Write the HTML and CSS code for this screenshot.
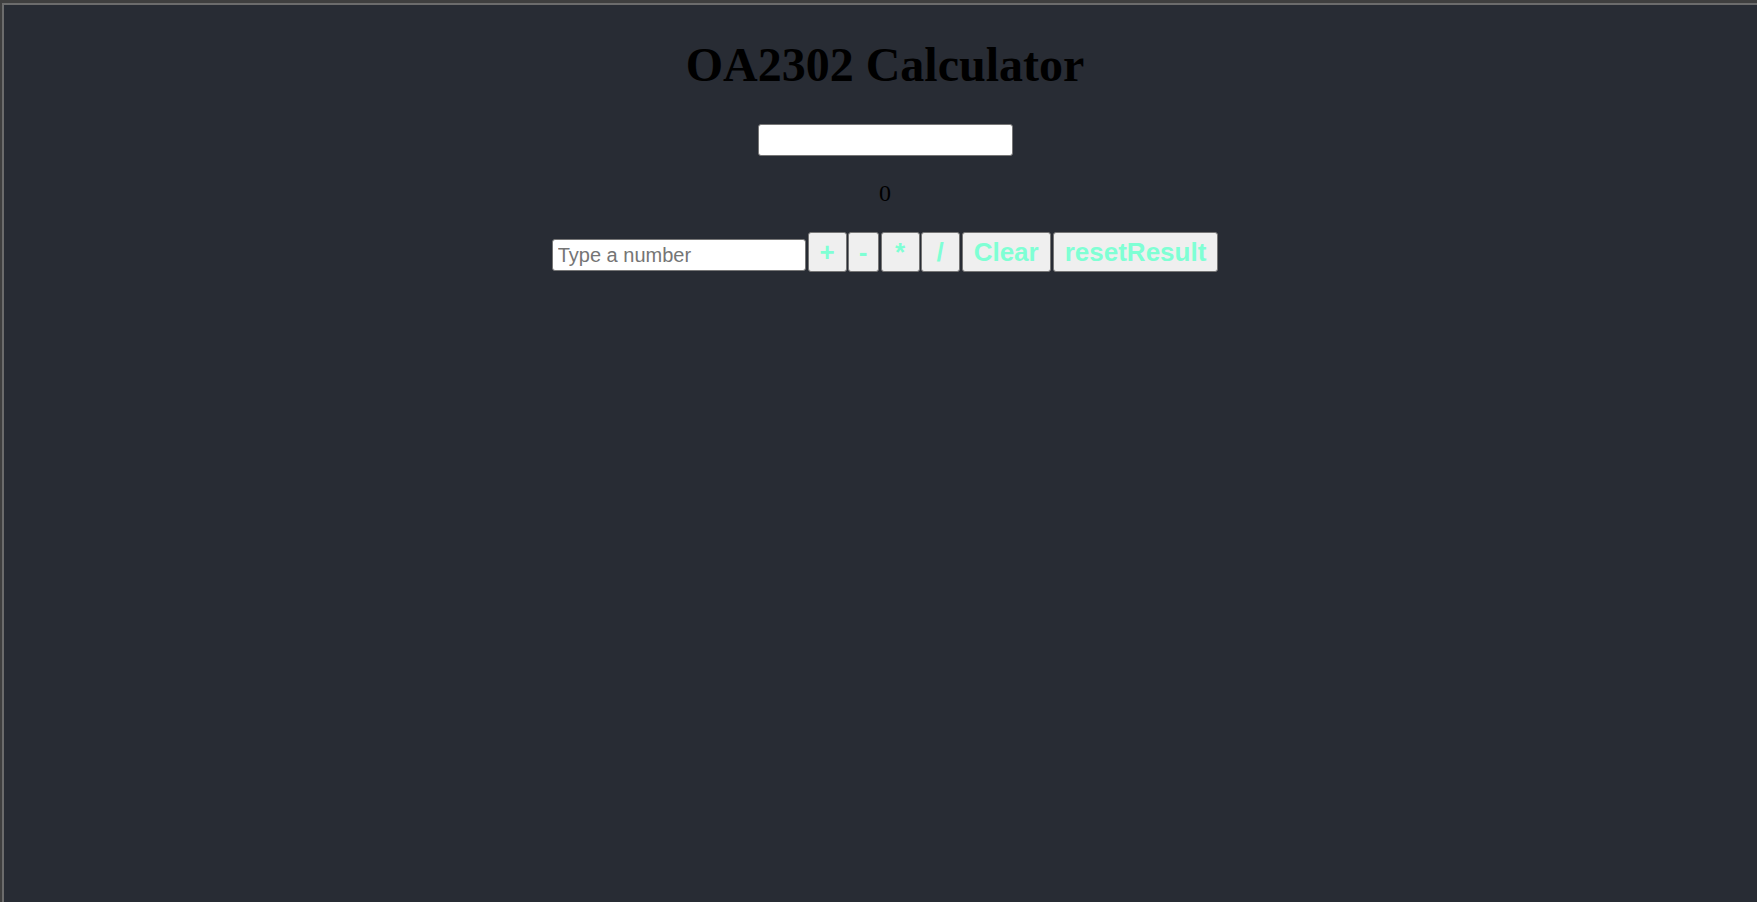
FILE: index.html
```html
<!DOCTYPE html>
<html>
<head>
<meta charset="utf-8">
<title>OA2302 Calculator</title>
<link rel="stylesheet" href="styles.css">
</head>
<body>
<div class="frame">
  <div class="frame-inner">
    <main class="app">
      <h1 class="title">OA2302 Calculator</h1>
      <input class="field field-display" type="text" value="">
      <p class="result">0</p>
      <form class="controls">
        <input class="field field-number" type="number" placeholder="Type a number">
        <button type="button" class="btn btn-add">+</button>
        <button type="button" class="btn btn-sub">-</button>
        <button type="button" class="btn btn-mul">*</button>
        <button type="button" class="btn btn-div">/</button>
        <button type="button" class="btn btn-word">Clear</button>
        <button type="button" class="btn btn-word">resetResult</button>
      </form>
    </main>
  </div>
</div>
</body>
</html>
```

FILE: styles.css
```css
html, body {
  margin: 0;
  padding: 0;
  height: 100%;
  overflow: hidden;
  background: #282c34;
}

.frame {
  box-sizing: border-box;
  height: 902px;
  border-top: 3px solid #3f3f3f;
  border-left: 2px solid #3f3f3f;
}

.frame-inner {
  box-sizing: border-box;
  height: 100%;
  border-top: 2px solid #6c6c6c;
  border-left: 2px solid #6c6c6c;
  background: #282c34;
  padding-left: 9px;
}

.app {
  display: flex;
  flex-direction: column;
  align-items: center;
  padding-top: 33px;
  font-family: "Liberation Serif", "Times New Roman", serif;
  color: #000;
}

.title {
  margin: 0;
  font-size: 48px;
  font-weight: bold;
  line-height: 53px;
}

.field {
  box-sizing: border-box;
  width: 255px;
  height: 32px;
  padding: 0 5px;
  border: 1px solid #767676;
  border-radius: 3px;
  background: #fff;
  font-family: "Liberation Sans", Arial, sans-serif;
  font-size: 20px;
  color: #000;
  outline: none;
}

.field::placeholder {
  color: #757575;
}

.field-display {
  margin-top: 33px;
}

.field-number {
  width: 254px;
  margin-bottom: 1px;
  -moz-appearance: textfield;
}

.field-number::-webkit-outer-spin-button,
.field-number::-webkit-inner-spin-button {
  -webkit-appearance: none;
  margin: 0;
}

.result {
  margin: 23px 0 0;
  font-size: 24px;
  line-height: 28px;
}

.controls {
  display: flex;
  align-items: flex-end;
  gap: 1px;
  margin-top: 25px;
}

.btn {
  box-sizing: border-box;
  height: 40px;
  padding: 0 11px;
  border: 1px solid #767676;
  border-radius: 3px;
  background: #efefef;
  color: #7fffd4;
  font-family: "Liberation Sans", Arial, sans-serif;
  font-size: 26px;
  font-weight: bold;
  line-height: 38px;
  cursor: pointer;
}

.btn-add { width: 39px; padding: 0; margin-left: 1px; }
.btn-sub { width: 31px; padding: 0; }
.btn-mul { width: 39px; padding: 0; margin-left: 1px; }
.btn-div { width: 39px; padding: 0; }
.btn-word { padding: 0 11px; margin-left: 1px; }
```
